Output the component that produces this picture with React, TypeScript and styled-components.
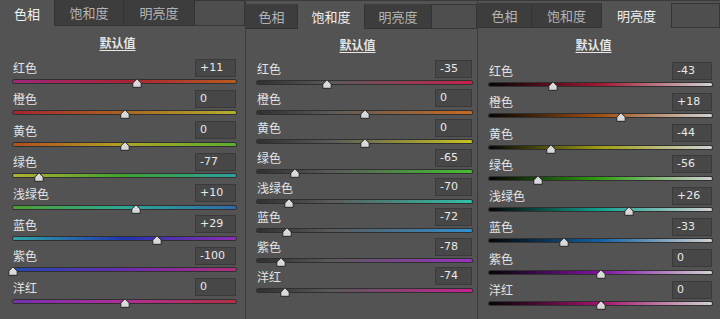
import * as React from 'react';
import styled, { createGlobalStyle } from 'styled-components';

type Row = { label: string; value: number; gradient: string };
type PanelSpec = {
  width: number;
  top: number;
  active: number;
  tabs: number[];
  tabHeight: number;
  titleHeight: number;
  rowHeight: number;
  padLeft: number;
  padRight: number;
  boxWidth: number;
  rows: Row[];
};

const names = ['红色', '橙色', '黄色', '绿色', '浅绿色', '蓝色', '紫色', '洋红'];

const hueGradients = [
  'linear-gradient(90deg, #a0267a, #aa2238 50%, #b85a1e)',
  'linear-gradient(90deg, #a42430, #aa6420 50%, #b2b030)',
  'linear-gradient(90deg, #b24c20, #b0a424 50%, #58b030)',
  'linear-gradient(90deg, #b0b030, #3ea230 50%, #2ea0a0)',
  'linear-gradient(90deg, #4ca030, #2ea894 50%, #2e6aa8)',
  'linear-gradient(90deg, #2ea6a6, #2234b0 50%, #8e2eb0)',
  'linear-gradient(90deg, #2248b0, #6a2cb0 50%, #b22e7c)',
  'linear-gradient(90deg, #7430b0, #b02e96 50%, #b22e42)',
];

const satColors = ['#c8204c', '#c86a20', '#c8c420', '#44c230', '#30c2aa', '#3090d2', '#9a30c4', '#c82092'];
const lumColors = ['#a01832', '#a25012', '#a09e12', '#32a014', '#12a290', '#1262a4', '#8212a4', '#a2126e'];

const build = (values: number[], grads: string[]): Row[] =>
  names.map((label, i) => ({ label, value: values[i], gradient: grads[i] }));

const panels: PanelSpec[] = [
  {
    width: 246,
    top: 0,
    active: 0,
    tabs: [55, 69, 71],
    tabHeight: 26,
    titleHeight: 32,
    rowHeight: 31.4,
    padLeft: 13,
    padRight: 9,
    boxWidth: 41,
    rows: build([11, 0, 0, -77, 10, 29, -100, 0], hueGradients),
  },
  {
    width: 232,
    top: 3,
    active: 1,
    tabs: [52, 67, 67],
    tabHeight: 25,
    titleHeight: 30,
    rowHeight: 29.7,
    padLeft: 11,
    padRight: 5,
    boxWidth: 37,
    rows: build(
      [-35, 0, 0, -65, -70, -72, -78, -74],
      satColors.map((c) => `linear-gradient(90deg, #303030, #5a5a5a 35%, ${c})`)
    ),
  },
  {
    width: 242,
    top: 2,
    active: 2,
    tabs: [54, 70, 70],
    tabHeight: 25,
    titleHeight: 33,
    rowHeight: 31.3,
    padLeft: 11,
    padRight: 8,
    boxWidth: 40,
    rows: build(
      [-43, 18, -44, -56, 26, -33, 0, 0],
      lumColors.map((c) => `linear-gradient(90deg, #050505, ${c} 50%, #d2d2d2)`)
    ),
  },
];

const tabNames = ['色相', '饱和度', '明亮度'];

const fmt = (v: number) => (v > 0 ? `+${v}` : `${v}`);

const App = () => {
  return (
    <Screen>
      <GlobalStyle />
      {panels.map((p, pi) => (
        <Panel key={pi} $width={p.width} $top={p.top} $last={pi === panels.length - 1}>
          <TabBar $height={p.tabHeight}>
            {tabNames.map((t, i) => (
              <Tab key={t} $width={p.tabs[i]} $active={i === p.active}>
                {t}
              </Tab>
            ))}
            <TabFill />
          </TabBar>
          <Body $left={p.padLeft} $right={p.padRight}>
            <Title $height={p.titleHeight}>
              <span>默认值</span>
            </Title>
            {p.rows.map((r) => (
              <SliderRow key={r.label} $height={p.rowHeight}>
                <RowHead>
                  <Label>{r.label}</Label>
                  <ValueBox $width={p.boxWidth}>{fmt(r.value)}</ValueBox>
                </RowHead>
                <TrackArea>
                  <Track style={{ background: r.gradient }} />
                  <Thumb style={{ left: `calc(${(r.value + 100) / 2}% - 5px)` }}>
                    <svg width="10" height="10" viewBox="0 0 10 10">
                      <path
                        d="M5 0.8 L9.2 5 L9.2 9.3 L0.8 9.3 L0.8 5 Z"
                        fill="#d9d9d9"
                        stroke="#262626"
                        strokeWidth="1"
                      />
                    </svg>
                  </Thumb>
                </TrackArea>
              </SliderRow>
            ))}
          </Body>
        </Panel>
      ))}
    </Screen>
  );
};

export default App;

const GlobalStyle = createGlobalStyle`
  body {
    margin: 0;
    background: #535353;
  }
`;

const Screen = styled.div`
  display: flex;
  width: 720px;
  height: 319px;
  overflow: hidden;
  background: #535353;
  font-family: 'Noto Sans CJK SC', 'DejaVu Sans', sans-serif;
  color: #e2e2e2;
`;

const Panel = styled.div<{ $width: number; $top: number; $last: boolean }>`
  width: ${(p) => p.$width}px;
  flex-shrink: 0;
  box-sizing: border-box;
  padding-top: ${(p) => p.$top}px;
  border-top: ${(p) => (p.$top ? '1px solid #3a3a3a' : 'none')};
  border-right: ${(p) => (p.$last ? 'none' : '1px solid #3b3b3b')};
  display: flex;
  flex-direction: column;
`;

const TabBar = styled.div<{ $height: number }>`
  display: flex;
  height: ${(p) => p.$height}px;
  flex-shrink: 0;
`;

const Tab = styled.div<{ $width: number; $active: boolean }>`
  width: ${(p) => p.$width}px;
  box-sizing: border-box;
  display: flex;
  align-items: center;
  justify-content: center;
  font-size: 13px;
  background: ${(p) => (p.$active ? '#535353' : '#3d3d3d')};
  color: ${(p) => (p.$active ? '#f0f0f0' : '#b4b4b4')};
  border-right: 1px solid #343434;
  border-bottom: ${(p) => (p.$active ? 'none' : '1px solid #343434')};
`;

const TabFill = styled.div`
  flex: 1;
  background: #4e4e4e;
  border: 1px solid #363636;
  border-left: none;
`;

const Body = styled.div<{ $left: number; $right: number }>`
  padding: 0 ${(p) => p.$right}px 0 ${(p) => p.$left}px;
  display: flex;
  flex-direction: column;
`;

const Title = styled.div<{ $height: number }>`
  height: ${(p) => p.$height}px;
  display: flex;
  align-items: center;
  justify-content: center;
  padding-right: 14px;
  font-size: 12px;
  font-weight: bold;
  color: #e6e6e6;
  span {
    text-decoration: underline;
    text-underline-offset: 2px;
  }
`;

const SliderRow = styled.div<{ $height: number }>`
  height: ${(p) => p.$height}px;
  flex-shrink: 0;
`;

const RowHead = styled.div`
  height: 19px;
  display: flex;
  align-items: center;
  justify-content: space-between;
`;

const Label = styled.span`
  font-size: 12px;
  color: #e4e4e4;
`;

const ValueBox = styled.div<{ $width: number }>`
  width: ${(p) => p.$width}px;
  height: 18px;
  box-sizing: border-box;
  background: #474747;
  border: 1px solid #3a3a3a;
  padding-left: 4px;
  font-family: 'DejaVu Sans', sans-serif;
  font-size: 11px;
  line-height: 16px;
  color: #e8e8e8;
`;

const TrackArea = styled.div`
  position: relative;
  margin-top: 3px;
  height: 10px;
`;

const Track = styled.div`
  height: 3px;
  border-radius: 2px;
  box-shadow: 0 0 0 1px rgba(20, 20, 20, 0.55);
`;

const Thumb = styled.div`
  position: absolute;
  top: -2px;
  width: 10px;
  height: 10px;
  line-height: 0;
`;
